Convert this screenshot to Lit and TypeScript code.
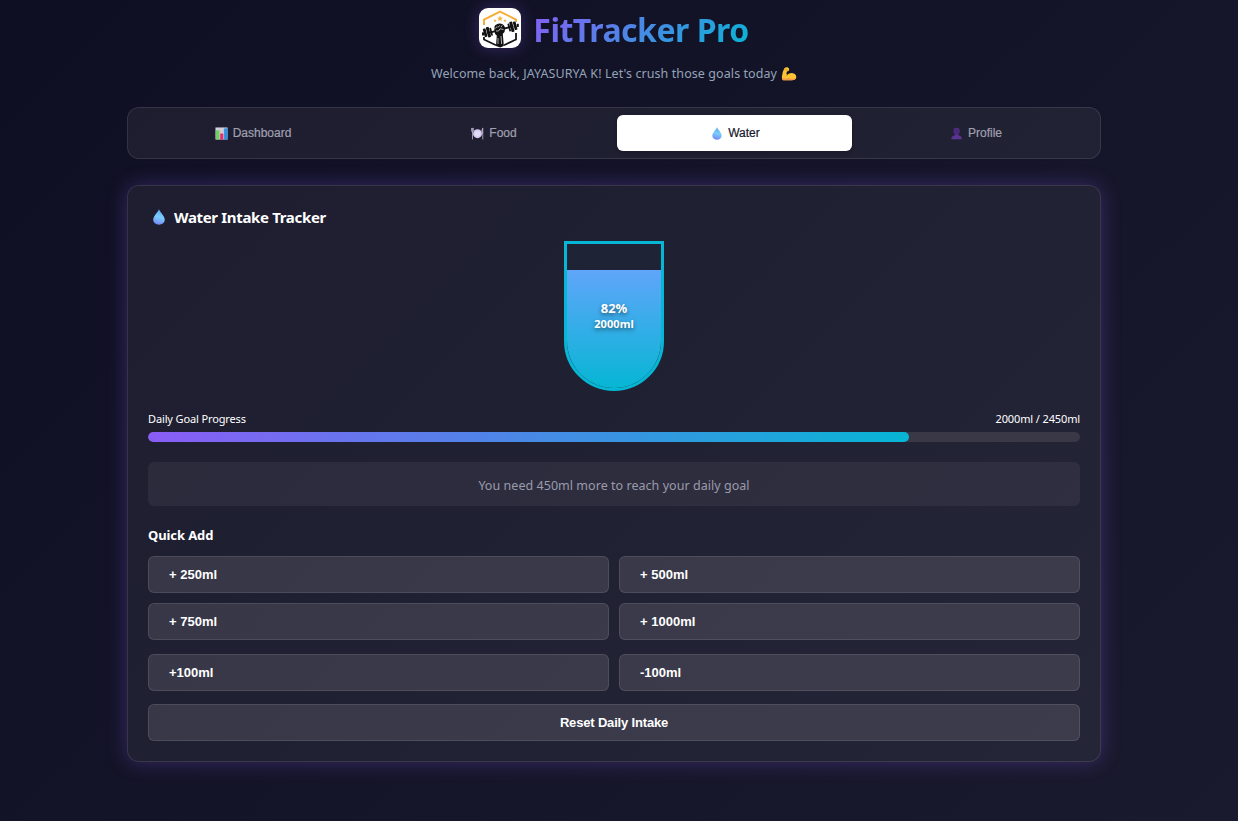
import { LitElement, html, css } from "lit";
import { customElement, property, state } from "lit/decorators.js";

const chartIcon = html`<svg viewBox="0 0 14 14" width="13" height="13"><rect x=".5" y=".5" width="13" height="13" fill="#d5cfdc"/><path d="M.5 4.5h13M.5 8.5h13M5 .5v13M9 .5v13" stroke="#bdb5c9" stroke-width=".5"/><rect x="1" y="3.5" width="3.6" height="10" fill="#6ed35d"/><rect x="5.6" y="7" width="3.3" height="6.5" fill="#e32d6c"/><rect x="9.8" y="1.5" width="3.7" height="12" fill="#2f8fe0"/></svg>`;
const plateIcon = html`<svg viewBox="0 0 14 14" width="13" height="13"><circle cx="7" cy="7.2" r="4.8" fill="#d6cbf3"/><circle cx="7" cy="7.2" r="3" fill="#e2dbf7"/><path d="M.6 1v3.2q0 1 1 1t1-1V1M1.6 1v12.4" stroke="#b9afc4" stroke-width=".9" fill="none"/><path d="M12.7 13.4V1q-1.2 1.5-1 6h1" stroke="#b9afc4" stroke-width=".9" fill="#b9afc4"/></svg>`;
const dropIcon = html`<svg viewBox="0 0 12 16" width="100%" height="100%"><defs><linearGradient id="d" x1=".6" y1="0" x2=".4" y2="1"><stop offset="0" stop-color="#5ba6ea"/><stop offset=".5" stop-color="#7bcdfb"/><stop offset="1" stop-color="#7386f6"/></linearGradient></defs><path d="M6 .2C7.2 3.2 11.8 7.2 11.8 10.7A5.8 5.1 0 0 1 .2 10.7C.2 7.2 4.8 3.2 6 .2Z" fill="url(#d)"/></svg>`;
const personIcon = html`<svg viewBox="0 0 14 14" width="13" height="13"><path d="M3.8 4.200Q3.800.9 7.100.9t3.300 3.300q0 2.400-1.500 3.800v1q3.900.6 4 4.300H1.300q.2-3.700 4.100-4.300V8Q3.800 6.600 3.800 4.200Z" fill="#5b3391"/><path d="M4.300 3.700Q4.600 1 7.100 1T10 3.700L9 8H5.300Z" fill="#4b2879"/></svg>`;
const armIcon = html`<svg viewBox="0 0 16 16" width="16" height="16"><path d="M3.200 2.600Q4.300 1 6.500 1.300q2 .5 1.700 2.500Q7.900 5.600 6 5.600l-.6 1.600.7 1.700Q8 6.700 11 6.900q4.100.5 4.300 4.300-.4 3-4.300 3H2.200Q.7 13.800.9 10.400 1.300 6.200 3.200 2.600Z" fill="#fcc432"/><path d="M1 11.800q3 1.300 6 .2 3.800 1.200 7.900.6-1 1.700-3.900 1.700H2.200Q1.100 13.500 1 11.800Z" fill="#f29a4a"/><path d="M6.100 8.900l-1.200 1.300M3.700 3.500l2.900.6" stroke="#df852d" stroke-width=".8" fill="none"/></svg>`;
const logo = html`<svg viewBox="0 0 42 40" width="42" height="40">
  <rect width="42" height="40" rx="9" fill="#fff"/>
  <path d="M5 17V11.500L21 3.500 37 11.500V14" fill="none" stroke="#f8ac35" stroke-width="2"/>
  <path d="M5 29v2.500L17 37.200M25 37.200l12-5.700V25" fill="none" stroke="#151515" stroke-width="1.800"/>
  <path d="M21 7.500l.9 2 2.100.2-1.600 1.400.5 2.100-1.900-1.100-1.900 1.100.5-2.100L18 9.700l2.100-.2ZM16 11l.5 1.100 1.100.1-.8.800.2 1.100-1-.6-1 .6.2-1.100-.8-.8 1.100-.1ZM26 11l.5 1.100 1.100.1-.8.800.2 1.100-1-.6-1 .6.2-1.100-.8-.8 1.100-.1Z" fill="#f4b64a"/>
  <g fill="#111"><path d="M8 24.400 34 17.200l.5 1.800L8.500 26.200Z"/>
  <rect x="4.800" y="20.500" width="2.800" height="8.500" rx=".8" transform="rotate(-15 6 25)"/><rect x="7.900" y="19" width="3" height="10.500" rx=".8" transform="rotate(-15 9 24)"/><rect x="3" y="24.300" width="2" height="3.300" rx=".6"/><rect x="11.300" y="19.800" width="1.800" height="8" rx=".5" transform="rotate(-15 12 24)"/>
  <rect x="34.800" y="13.500" width="2.800" height="8.500" rx=".8" transform="rotate(-15 36 18)"/><rect x="31.400" y="13.500" width="3" height="10.500" rx=".8" transform="rotate(-15 33 19)"/><rect x="37.800" y="15.800" width="2" height="3.200" rx=".6"/><rect x="29.200" y="15.500" width="1.800" height="8" rx=".5" transform="rotate(-15 30 19)"/>
  <path d="M15.500 20q-.5-2.500 2-3.500 3-1.700 6-.3 2.500 1 2.500 4.500.3 3.200-2.200 5L24.800 38l-3.600 1.500L17 38l.8-10.500q-3-1.500-2.300-7.500Z"/></g>
  <path d="M16.500 20.500l1.600-2.200M19 19.500l1.800-2.200M22 19.200l1.200-1.900M17 23q3 1 4-2.200l3.500.7M19 30v6M22 28l.6 8" fill="none" stroke="#f4f4f4" stroke-width=".7"/>
</svg>`;

const tabs = [
  { id: "dashboard", label: "Dashboard", icon: chartIcon },
  { id: "food", label: "Food", icon: plateIcon },
  { id: "water", label: "Water", icon: html`<span class="drop">${dropIcon}</span>` },
  { id: "profile", label: "Profile", icon: personIcon },
];

@customElement("tab-bar")
class TabBar extends LitElement {
  @property() active = "water";
  static styles = css`
    :host { display: block; }
    .bar { box-sizing: border-box; height: 52px; display: grid; grid-template-columns: repeat(4, 1fr); gap: 6px; padding: 7px; border: 1px solid rgba(255,255,255,.1); border-radius: 12px; background: rgba(255,255,255,.056); }
    .tab { border: 0; border-radius: 6px; padding: 1px 0 0 1px; background: transparent; color: #a0a0b0; font: 500 12px/35px "Liberation Sans", Arial, sans-serif; -webkit-text-stroke: .2px; display: flex; align-items: center; justify-content: center; gap: 5px; }
    .active { background: #fff; color: #17172b; box-shadow: 0 2px 5px rgba(0,0,0,.25); }
    .drop { width: 10px; height: 13px; display: flex; margin: 0 1px 0 2px; }
    svg { display: block; }
  `;
  render() {
    return html`<nav class="bar">${tabs.map(t => html`<button class="tab ${t.id === this.active ? "active" : ""}" @click=${() => (this.active = t.id)}>${t.icon}<span>${t.label}</span></button>`)}</nav>`;
  }
}

@customElement("water-tracker")
class WaterTracker extends LitElement {
  @state() amount = 2000;
  private goal = 2450;
  static styles = css`
    :host { display: block; color: #fff; font-family: "Noto Sans", sans-serif; }
    .card { box-sizing: border-box; height: 577px; padding: 20px; border: 1px solid rgba(255,255,255,.1); border-radius: 12px; background: rgba(255,255,255,.056); box-shadow: 0 0 20px rgba(139,92,246,.3); display: flex; flex-direction: column; }
    .title { margin: 0; height: 22px; display: flex; align-items: center; gap: 9px; padding-left: 5px; font-size: 15px; line-height: 22px; font-weight: 700; letter-spacing: -.33px; white-space: nowrap; }
    .drop { width: 12px; height: 16px; display: flex; }
    .glass { box-sizing: border-box; align-self: center; flex: none; width: 100px; height: 150px; margin-top: 13px; border: 3px solid #06b6d4; border-radius: 0 0 50px 50px; overflow: hidden; display: grid; background: rgba(6,182,212,.025); }
    .fill { grid-area: 1/1; align-self: end; background: linear-gradient(#60a5fa, #06b6d4); }
    .reading { grid-area: 1/1; place-self: center; text-align: center; font-weight: 700; text-shadow: 0 2px 4px rgba(0,0,0,.5); z-index: 1; }
    .percent { font-size: 13px; line-height: 16px; letter-spacing: -.1px; }
    .ml { font-size: 11px; line-height: 16px; letter-spacing: .05px; }
    .labels { display: flex; justify-content: space-between; margin-top: 20px; font-size: 11px; line-height: 16px; height: 16px; letter-spacing: -.13px; }
    .track { flex: none; height: 10px; margin-top: 5px; border-radius: 5px; background: #3a3846; overflow: hidden; }
    .progress { height: 10px; border-radius: 5px; background: linear-gradient(135deg, #8b5cf6, #06b6d4); }
    .note { flex: none; height: 44px; margin-top: 20px; border-radius: 6px; background: rgba(255,245,245,.06); color: #9a9bab; text-align: center; font-size: 12.500px; line-height: 47px; letter-spacing: .04px; }
    .subtitle { margin: 19px 0 11px; font-size: 13px; line-height: 20px; height: 20px; font-weight: 700; letter-spacing: -.1px; }
    .grid { display: grid; grid-template-columns: 1fr 1fr; gap: 10px; }
    .adjust { margin-top: 14px; }
    .btn { box-sizing: border-box; height: 37px; border: 1px solid rgba(255,255,255,.1); border-radius: 6px; background: rgba(255,246,246,.112); color: #fff; text-align: left; padding: 0 20px; font: 700 13px/35px "Liberation Sans", Arial, sans-serif; }
    .reset { margin-top: 13px; text-align: center; flex: none; letter-spacing: -.17px; }
  `;
  private add(n: number) { this.amount = Math.max(0, this.amount + n); }
  render() {
    const pct = Math.min(100, (this.amount / this.goal) * 100);
    return html`<section class="card">
      <h2 class="title"><span class="drop">${dropIcon}</span><span>Water Intake Tracker</span></h2>
      <div class="glass"><div class="fill" style="height:${Math.round(pct)}%"></div>
        <div class="reading"><div class="percent">${Math.round(pct)}%</div><div class="ml">${this.amount}ml</div></div></div>
      <div class="labels"><span>Daily Goal Progress</span><span>${this.amount}ml / ${this.goal}ml</span></div>
      <div class="track"><div class="progress" style="width:${pct}%"></div></div>
      <div class="note"><span>You need ${this.goal - this.amount}ml more to reach your daily goal</span></div>
      <h3 class="subtitle">Quick Add</h3>
      <div class="grid">${[250, 500, 750, 1000].map(n => html`<button class="btn" @click=${() => this.add(n)}>+ ${n}ml</button>`)}</div>
      <div class="grid adjust"><button class="btn" @click=${() => this.add(100)}>+100ml</button><button class="btn" @click=${() => this.add(-100)}>-100ml</button></div>
      <button class="btn reset" @click=${() => (this.amount = 0)}>Reset Daily Intake</button>
    </section>`;
  }
}

@customElement("app-root")
class AppRoot extends LitElement {
  static styles = css`
    :host { display: block; box-sizing: border-box; height: 821px; padding: 8px 137px 0 127px; overflow: hidden; background: linear-gradient(135deg, #0f0f23, #1a1a2e); font-family: "Noto Sans", sans-serif; }
    .brand { display: flex; justify-content: center; align-items: center; gap: 12px; height: 40px; }
    .logo { display: block; height: 40px; border-radius: 9px; box-shadow: 0 0 15px rgba(139,92,246,.3); }
    .logo svg { display: block; }
    .name { margin: 0; padding-top: 4px; font-size: 32px; line-height: 44px; font-weight: 700; letter-spacing: -.5px; background: linear-gradient(135deg, #8b5cf6, #06b6d4); -webkit-background-clip: text; background-clip: text; color: transparent; white-space: nowrap; }
    .welcome { margin: 16px 0 0; height: 20px; display: flex; justify-content: center; align-items: center; gap: 4px; font-size: 12.500px; line-height: 20px; letter-spacing: .08px; color: #94a3b8; white-space: nowrap; }
    .tabs { margin-top: 23px; }
    .tracker { margin-top: 26px; }
  `;
  render() {
    return html`<header><div class="brand"><span class="logo">${logo}</span><h1 class="name">FitTracker Pro</h1></div>
      <p class="welcome"><span>Welcome back, JAYASURYA K! Let's crush those goals today</span>${armIcon}</p></header>
      <tab-bar class="tabs"></tab-bar><water-tracker class="tracker"></water-tracker>`;
  }
}
